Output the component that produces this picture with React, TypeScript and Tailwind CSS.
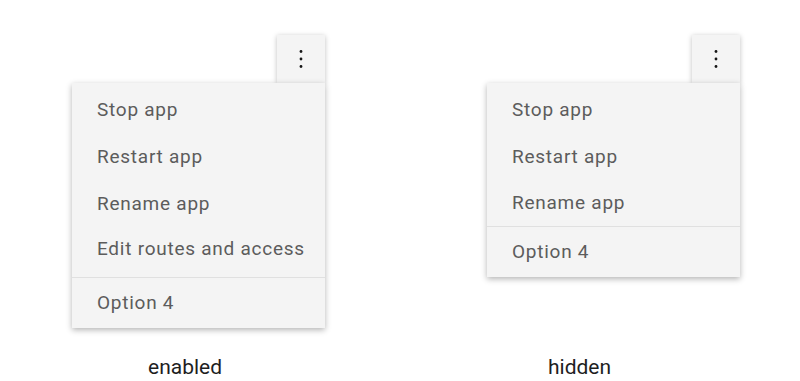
import React from "react";

function OverflowIcon() {
  return (
    <svg width="8" height="20" viewBox="0 0 8 20" fill="#161616" aria-hidden="true">
      <circle cx="4" cy="2.5" r="1.4" />
      <circle cx="4" cy="10" r="1.4" />
      <circle cx="4" cy="17.5" r="1.4" />
    </svg>
  );
}

type Item = { label: string; h: string };

function OverflowMenu({ items, last }: { items: Item[]; last: string }) {
  return (
    <div className="flex w-[253px] flex-col items-end">
      <button className="relative z-0 flex h-[48px] w-[48px] items-center justify-center bg-[#f4f4f4] shadow-[0_1px_5px_rgba(0,0,0,0.25)]">
        <OverflowIcon />
      </button>
      <div className="relative z-10 w-full bg-[#f4f4f4] pt-[4px] shadow-[0_2px_6px_rgba(0,0,0,0.3)]">
        {items.map((it) => (
          <div key={it.label} className={`flex items-center pl-[25px] ${it.h}`}>
            {it.label}
          </div>
        ))}
        <div className="flex h-[51px] items-center border-t border-[#e0e0e0] pl-[25px]">{last}</div>
      </div>
    </div>
  );
}

export default function App() {
  return (
    <div className="h-[381px] w-[800px] bg-white font-['Roboto',sans-serif]">
      <div className="flex items-start pl-[72px] pt-[35px] text-[19px] tracking-[0.75px] text-[#5c5c5c]">
        <OverflowMenu
          items={[
            { label: "Stop app", h: "h-[47px]" },
            { label: "Restart app", h: "h-[47px]" },
            { label: "Rename app", h: "h-[46px]" },
            { label: "Edit routes and access", h: "h-[44px] mb-[6px]" },
          ]}
          last="Option 4"
        />
        <div className="ml-[162px]">
          <OverflowMenu
            items={[
              { label: "Stop app", h: "h-[47px]" },
              { label: "Restart app", h: "h-[47px]" },
              { label: "Rename app", h: "h-[45px]" },
            ]}
            last="Option 4"
          />
        </div>
      </div>
      <div className="flex pt-[24px] text-[21px] text-[#1e1e1e]">
        <span className="ml-[148px] w-[400px]">enabled</span>
        <span>hidden</span>
      </div>
    </div>
  );
}
